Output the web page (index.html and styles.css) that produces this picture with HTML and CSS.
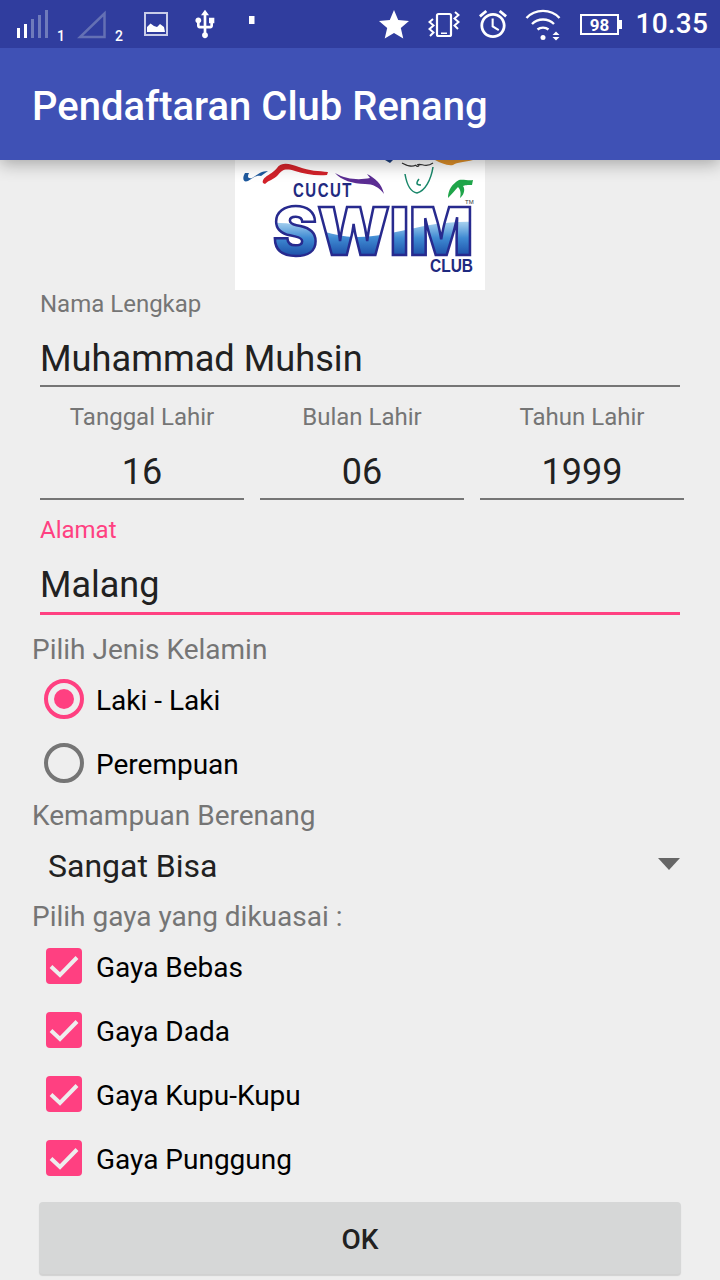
FILE: index.html
```html
<!DOCTYPE html>
<html lang="id">
<head>
<meta charset="utf-8">
<title>Pendaftaran Club Renang</title>
<link rel="stylesheet" href="styles.css">
</head>
<body>
<div class="phone">
  <header class="top">
    <div class="status">
      <div class="status-group left">
        <svg class="i-signal" viewBox="0 0 50 48" width="50" height="48">
          <rect x="0" y="28" width="3" height="10" fill="#fff"/>
          <rect x="7" y="24" width="3" height="14" fill="#fff"/>
          <rect x="14" y="19" width="3" height="19" fill="#6f7bbb"/>
          <rect x="21" y="15" width="3" height="23" fill="#6f7bbb"/>
          <rect x="28" y="10" width="3" height="28" fill="#6f7bbb"/>
          <text x="44" y="40.500" class="sim">1</text>
        </svg>
        <svg class="i-tri" viewBox="0 0 48 48" width="48" height="48">
          <path d="M3 37 H27.500 V13.500 Z" fill="none" stroke="#6470b4" stroke-width="2.500"/>
          <text x="42" y="40.500" class="sim">2</text>
        </svg>
        <svg class="i-img" viewBox="0 0 24 48" width="24" height="48">
          <rect x="1" y="13" width="22" height="22" fill="none" stroke="#c9cde8" stroke-width="2"/>
          <path d="M3 32 V27 L6.500 23.500 L10 26 L13 27 L16 24 L20 27 L21 32 Z" fill="#fff"/>
        </svg>
        <svg class="i-usb" viewBox="4.500 1 15 21.200" width="20" height="30">
          <path fill="#fff" d="M15 7v4h1v2h-3V5h2l-3-4-3 4h2v8H8v-2.070c.7-.37 1.200-1.080 1.200-1.930 0-1.210-.99-2.200-2.200-2.200-1.210 0-2.200.99-2.200 2.200 0 .85.5 1.560 1.200 1.930V13c0 1.110.89 2 2 2h3v3.050c-.71.37-1.200 1.100-1.200 1.950 0 1.220.99 2.200 2.200 2.200 1.210 0 2.200-.98 2.200-2.200 0-.85-.49-1.580-1.200-1.950V15h3c1.110 0 2-.89 2-2v-2h1V7h-4z"/>
        </svg>
        <svg class="i-dot" viewBox="0 0 6 48" width="6" height="48">
          <rect x="0" y="16" width="5.500" height="8" fill="#fff"/>
        </svg>
      </div>
      <div class="status-group right">
        <svg class="i-star" viewBox="2 2 20 19.270" width="30" height="29">
          <path fill="#fff" d="M12 17.270L18.180 21l-1.640-7.030L22 9.240l-7.190-.61L12 2 9.190 8.630 2 9.240l5.460 4.730L5.820 21z"/>
        </svg>
        <svg class="i-vib" viewBox="0 0 32 48" width="32" height="48">
          <rect x="9" y="14" width="14" height="22" rx="1.500" fill="none" stroke="#fff" stroke-width="2.200"/>
          <rect x="13" y="32.500" width="6" height="1.500" fill="#fff"/>
          <path d="M5 19 L1.500 22 L5.500 25.500 L1.500 29 L5.500 32.500 L2 36" fill="none" stroke="#fff" stroke-width="2"/>
          <path d="M27 12 L30.500 15 L26.500 18.500 L30.500 22 L26.500 25.500 L30 29" fill="none" stroke="#fff" stroke-width="2"/>
        </svg>
        <svg class="i-alarm" viewBox="2 1.860 20 20.140" width="28" height="30">
          <path fill="#fff" d="M22 5.720l-4.600-3.860-1.290 1.530 4.600 3.860L22 5.720zM7.880 3.390L6.600 1.860 2 5.710l1.290 1.530 4.590-3.850zM12.500 8H11v6l4.750 2.850.75-1.230-4-2.370V8zM12 4c-4.970 0-9 4.030-9 9s4.030 9 9 9 9-4.030 9-9-4.030-9-9-9zm0 16c-3.870 0-7-3.130-7-7s3.130-7 7-7 7 3.130 7 7-3.130 7-7 7z"/>
        </svg>
        <svg class="i-wifi" viewBox="0 0 36 48" width="36" height="48">
          <path d="M1.500 18 C10 8.500 26 8.500 34.500 18" fill="none" stroke="#fff" stroke-width="2.400"/>
          <path d="M7 24 C13 18 23 18 29 24" fill="none" stroke="#fff" stroke-width="2.400"/>
          <path d="M12.500 29.500 C15.500 27 20.500 27 23.500 29.500" fill="none" stroke="#fff" stroke-width="2.400"/>
          <circle cx="18" cy="37.500" r="2.500" fill="#fff"/>
          <path d="M27.500 35 L31 31.500 L34.500 35 Z M27.500 37 L31 40.500 L34.500 37 Z" fill="#fff"/>
        </svg>
        <svg class="i-batt" viewBox="0 0 42 48" width="42" height="48">
          <rect x="1" y="15" width="37" height="19" fill="none" stroke="#fff" stroke-width="2"/>
          <rect x="39" y="20" width="3" height="9" fill="#fff"/>
          <text x="19.500" y="31" class="batt-num">98</text>
        </svg>
        <span class="clock">10.35</span>
      </div>
    </div>
    <div class="appbar">Pendaftaran Club Renang</div>
  </header>

  <main class="form">
    <div class="logo-wrap">
      <svg class="logo" viewBox="0 0 250 130" width="250" height="130">
        <defs>
          <linearGradient id="waterGrad" x1="0" y1="60" x2="0" y2="96" gradientUnits="userSpaceOnUse">
            <stop offset="0" stop-color="#b4daf3"/>
            <stop offset="0.5" stop-color="#3f8ad2"/>
            <stop offset="1" stop-color="#1c4fa8"/>
          </linearGradient>
          <pattern id="swimFill" x="0" y="0" width="250" height="130" patternUnits="userSpaceOnUse">
            <rect width="250" height="130" fill="#fff"/>
            <path d="M30 63 C70 60 90 77 123 77 C160 77 190 60 240 62 V100 H30 Z" fill="url(#waterGrad)"/>
          </pattern>
        </defs>
        <rect width="250" height="130" fill="#fff"/>
        <path d="M28 23 C26 17 38 14 42 8 C46 2 54 3 64 7 C74 11 84 11 93 12 L92 15 C80 16 70 14 60 11 C50 8 47 10 43 15 C38 20 34 20 30 24 Z" fill="#d3222a"/>
        <path d="M10 13 C7 18 8 23 13 21 C17 19 20 15 26 16 L33 11 C26 11 22 15 17 18 C13 19 12 17 14 13 Z" fill="#1f5a9e"/>
        <path d="M100 13 C112 20 125 20 135 18 L132 14 C140 18 147 24 149 34 C144 27 138 24 130 24 C118 24 106 20 100 13 Z" fill="#5b2d93"/>
        <path d="M150 0 L155 3 L158 0 Z" fill="#1d3f80"/>
        <path d="M170 14 C172 26 176 32 182 33 C190 31 196 20 198 7 M184 19 C181 23 181 25 186 25" fill="none" stroke="#19876a" stroke-width="1.500"/>
        <path d="M167 3 C171 5 176 8 181 5 M182 5 C186 2 190 9 198 3 M181 5 C181 7 184 7 184 5" fill="none" stroke="#333" stroke-width="1.200"/>
        <path d="M200 0 H238 C230 2 222 2 218 5 C212 6 206 3 200 0 Z" fill="#e0912a"/>
        <path d="M213 38 C213 30 217 24 224 20 C228 19 234 21 238 20 L237 25 C232 25 230 25 228 26 C231 30 228 36 225 38 C226 34 226 30 223 27 C220 30 217 34 213 38 Z" fill="#1fa54a"/>
        <text x="58" y="37" textLength="60" lengthAdjust="spacingAndGlyphs" class="logo-cucut">CUCUT</text>
        <text x="230" y="44" class="logo-tm">TM</text>
        <text x="38" y="95" textLength="200" lengthAdjust="spacingAndGlyphs" class="logo-swim" fill="url(#swimFill)">SWIM</text>
        <text x="195" y="112" textLength="43" lengthAdjust="spacingAndGlyphs" class="logo-club">CLUB</text>
      </svg>
    </div>

    <div class="field name-field">
      <label class="field-label">Nama Lengkap</label>
      <div class="field-value">Muhammad Muhsin</div>
    </div>

    <div class="date-row">
      <div class="date-col">
        <label class="field-label">Tanggal Lahir</label>
        <div class="field-value">16</div>
      </div>
      <div class="date-col">
        <label class="field-label">Bulan Lahir</label>
        <div class="field-value">06</div>
      </div>
      <div class="date-col">
        <label class="field-label">Tahun Lahir</label>
        <div class="field-value">1999</div>
      </div>
    </div>

    <div class="field focused">
      <label class="field-label">Alamat</label>
      <div class="field-value">Malang</div>
    </div>

    <div class="section-title first">Pilih Jenis Kelamin</div>
    <div class="choice"><span class="radio on"></span><span class="choice-text">Laki - Laki</span></div>
    <div class="choice"><span class="radio"></span><span class="choice-text">Perempuan</span></div>

    <div class="section-title skill">Kemampuan Berenang</div>
    <div class="spinner"><span>Sangat Bisa</span><i class="caret"></i></div>

    <div class="section-title styles">Pilih gaya yang dikuasai :</div>
    <div class="choice"><span class="check"><svg viewBox="0 0 36 36" width="36" height="36"><path d="M5 18.500 L14 27 L31 9.500" fill="none" stroke="#eee" stroke-width="4"/></svg></span><span class="choice-text">Gaya Bebas</span></div>
    <div class="choice"><span class="check"><svg viewBox="0 0 36 36" width="36" height="36"><path d="M5 18.500 L14 27 L31 9.500" fill="none" stroke="#eee" stroke-width="4"/></svg></span><span class="choice-text">Gaya Dada</span></div>
    <div class="choice"><span class="check"><svg viewBox="0 0 36 36" width="36" height="36"><path d="M5 18.500 L14 27 L31 9.500" fill="none" stroke="#eee" stroke-width="4"/></svg></span><span class="choice-text">Gaya Kupu-Kupu</span></div>
    <div class="choice"><span class="check"><svg viewBox="0 0 36 36" width="36" height="36"><path d="M5 18.500 L14 27 L31 9.500" fill="none" stroke="#eee" stroke-width="4"/></svg></span><span class="choice-text">Gaya Punggung</span></div>

    <div class="btn-row"><button class="ok">OK</button></div>
  </main>
</div>
</body>
</html>
```
FILE: styles.css
```css
* { box-sizing: border-box; }
html, body { margin: 0; padding: 0; }
body { font-family: Roboto, "Noto Sans", sans-serif; background: #eeeeee; }
.phone { width: 720px; height: 1280px; overflow: hidden; display: flex; flex-direction: column; background: #eeeeee; }

.top { position: relative; z-index: 2; box-shadow: 0 4px 16px rgba(0,0,0,.3); flex: none; }
.status { height: 48px; background: #303d9e; display: flex; justify-content: space-between; color: #fff; }
.status-group { display: flex; align-items: center; }
.status-group svg { display: block; flex: none; }
.status-group.left { padding-left: 17px; }
.status-group.right { padding-right: 12px; }
.sim { font: 500 14px Roboto, sans-serif; fill: #fff; text-anchor: middle; }
.i-tri { margin-left: 10px; }
.i-img { margin-left: 19px; }
.i-usb { margin-left: 27px; }
.i-dot { margin-left: 34px; }
.i-vib { margin-left: 19px; }
.i-alarm { margin-left: 19px; }
.i-wifi { margin-left: 18px; }
.i-batt { margin-left: 19px; }
.batt-num { font: 700 17px Roboto, sans-serif; fill: #fff; text-anchor: middle; }
.clock { margin-left: 14px; font-size: 28px; font-weight: 500; line-height: 48px; letter-spacing: .2px; }
.appbar { height: 112px; background: #3f51b5; color: #fff; font-size: 40px; font-weight: 500; line-height: 118px; padding-left: 32px; }

.form { flex: 1; display: flex; flex-direction: column; }
.logo-wrap { height: 130px; display: flex; justify-content: center; flex: none; }
.logo { display: block; }
.logo-cucut { font: 700 20px "Liberation Sans", sans-serif; fill: #1f2a80; letter-spacing: 2px; }
.logo-club { font: 700 19px "Liberation Sans", sans-serif; fill: #1f2a80; }
.logo-tm { font: 400 6px "Liberation Sans", sans-serif; fill: #333; }
.logo-swim { font: 900 66px Inter, "Liberation Sans", sans-serif; stroke: #272a8e; stroke-width: 2.500; }

.field { margin: 0 40px; flex: none; }
.field-label { display: block; font-size: 24px; line-height: 28px; color: #757575; }
.field-value { font-size: 36px; line-height: 48px; color: #212121; }
.name-field .field-value { margin-top: 17px; height: 52px; font-size: 36.200px; border-bottom: 2px solid #757575; }
.focused { margin-top: 16px; }
.focused .field-label { color: #ff4081; }
.focused .field-value { margin-top: 17px; height: 54px; border-bottom: 3px solid #ff4081; }

.date-row { display: flex; gap: 16px; padding-left: 40px; margin-top: 16px; flex: none; }
.date-col { width: 204px; text-align: center; }
.date-col .field-value { margin-top: 17px; height: 52px; border-bottom: 2px solid #757575; }

.section-title { font-size: 28px; line-height: 32px; color: #757575; padding-left: 32px; flex: none; }
.section-title.first { margin: 19px 0 2px; }
.section-title.skill { margin-top: 4px; }
.section-title.styles { margin: 3px 0 2px; }

.choice { height: 64px; display: flex; align-items: center; flex: none; padding-left: 44px; }
.choice-text { font-size: 28px; color: #000; margin-left: 12px; }
.radio { width: 40px; height: 40px; border-radius: 50%; border: 4px solid #757575; flex: none; position: relative; margin-top: -2px; }
.radio.on { border-color: #ff4081; }
.radio.on::after { content: ""; position: absolute; inset: 6px; border-radius: 50%; background: #ff4081; }
.check { width: 36px; height: 36px; border-radius: 4px; background: #ff4081; margin: -2px 2px 0; flex: none; }
.check svg { display: block; }

.spinner { height: 64px; display: flex; align-items: center; justify-content: space-between; padding: 0 40px 0 48px; font-size: 32px; color: #212121; flex: none; margin-top: 2px; }
.caret { width: 0; height: 0; border-left: 11px solid transparent; border-right: 11px solid transparent; border-top: 12px solid #666; margin-top: -4px; }

.btn-row { padding: 11px 39px 0; flex: none; }
.ok { width: 642px; height: 72px; display: block; border: 0; border-radius: 4px; background: #d6d7d7; box-shadow: 0 2px 1px rgba(0,0,0,.12); font: 500 28px Roboto, sans-serif; color: #212121; padding: 2px 0 0; }
```
